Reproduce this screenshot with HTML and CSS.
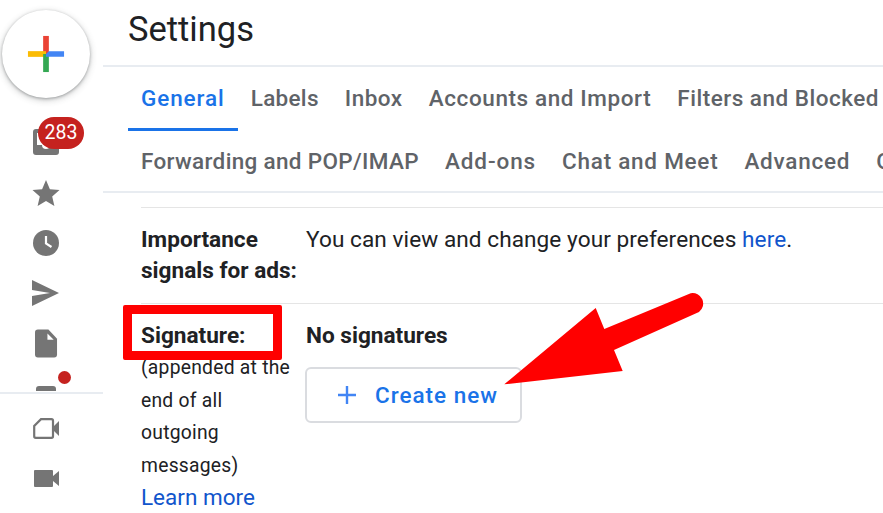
FILE: index.html
```html
<!DOCTYPE html>
<html lang="en">
<head>
    <meta charset="UTF-8">
    <title>Settings</title>
    <link rel="stylesheet" href="styles.css">
</head>
<body>
    <div class="page">
        <aside class="rail">
            <div class="compose">
                <svg width="38" height="38" viewBox="0 0 40 40">
                    <rect x="17" y="1" width="6" height="19" fill="#ea4335"/>
                    <rect x="1" y="17" width="19" height="6" fill="#fbbc04"/>
                    <rect x="17" y="20" width="6" height="19" fill="#34a853"/>
                    <path d="M20 20 L23 17 H39 V23 H20 Z" fill="#4285f4"/>
                </svg>
            </div>
            <div class="rail-top">
                <div class="rail-item">
                    <svg width="26" height="26" viewBox="0 0 26 26"><path d="M3 0H23A3 3 0 0 1 26 3V23A3 3 0 0 1 23 26H3A3 3 0 0 1 0 23V3A3 3 0 0 1 3 0ZM4 4V16H9A4 4 0 0 0 17 16H22V4Z" fill="#757575"/></svg>
                    <span class="count">283</span>
                </div>
                <div class="rail-item">
                    <svg width="28" height="26" viewBox="0 0 28 26"><path d="M14 0 L17.9 9.2 L27.5 10 L20.2 16.4 L22.4 26 L14 20.9 L5.6 26 L7.8 16.4 L.5 10 L10.1 9.2Z" fill="#757575"/></svg>
                </div>
                <div class="rail-item">
                    <svg width="26" height="26" viewBox="0 0 26 26"><circle cx="13" cy="13" r="13" fill="#757575"/><path d="M13 6V13.5L18.5 17" fill="none" stroke="#fff" stroke-width="2.2"/></svg>
                </div>
                <div class="rail-item">
                    <svg width="28" height="26" viewBox="0 0 28 26"><path d="M0 0 L27 13 L0 26 V16 L18 13 L0 10Z" fill="#757575"/></svg>
                </div>
                <div class="rail-item">
                    <svg width="23" height="29" viewBox="0 0 24 29"><path d="M3 0H14L23 9.500V26A3 3 0 0 1 20 29H3A3 3 0 0 1 0 26V3A3 3 0 0 1 3 0Z" fill="#757575"/><path d="M13 4 L19.500 10.500 H13Z" fill="#fff"/></svg>
                </div>
                <div class="rail-item rail-more">
                    <svg width="21" height="5" viewBox="0 0 21 5"><path d="M0 5V3A3 3 0 0 1 3 0H17A3 3 0 0 1 20 3V5Z" fill="#757575"/></svg>
                    <span class="dot"></span>
                </div>
            </div>
            <div class="rail-bottom">
                <div class="rail-item">
                    <svg width="27" height="21" viewBox="0 0 27 21"><path d="M8 1.200H18.500A1.500 1.500 0 0 1 20 2.700V18.300A1.500 1.500 0 0 1 18.500 19.800H2.700A1.500 1.500 0 0 1 1.200 18.300V8Z" fill="none" stroke="#757575" stroke-width="2.200"/><path d="M21 8 L26 3 V18 L21 13Z" fill="#757575"/></svg>
                </div>
                <div class="rail-item">
                    <svg width="25" height="17" viewBox="0 0 25 17"><path d="M1 0H18A1 1 0 0 1 19 1V16A1 1 0 0 1 18 17H1A1 1 0 0 1 0 16V1A1 1 0 0 1 1 0ZM19 6 L25 1 V16 L19 11Z" fill="#757575"/></svg>
                </div>
            </div>
        </aside>

        <main class="main">
            <h1 class="title">Settings</h1>
            <nav class="tabs">
                <div class="tab-row first">
                    <a class="tab active">General</a>
                    <a class="tab">Labels</a>
                    <a class="tab">Inbox</a>
                    <a class="tab">Accounts and Import</a>
                    <a class="tab">Filters and Blocked Addresses</a>
                </div>
                <div class="tab-row second">
                    <a class="tab">Forwarding and POP/IMAP</a>
                    <a class="tab">Add-ons</a>
                    <a class="tab">Chat and Meet</a>
                    <a class="tab">Advanced</a>
                    <a class="tab">Offline</a>
                </div>
            </nav>
            <div class="content">
                <div class="row ads">
                    <div class="label"><strong>Importance signals for ads:</strong></div>
                    <div class="value">You can view and change your preferences <a class="link">here</a>.</div>
                </div>
                <div class="row sig">
                    <div class="label">
                        <strong>Signature:</strong>
                        <p class="note">(appended at the end of all outgoing messages)</p>
                        <a class="link">Learn more</a>
                    </div>
                    <div class="value">
                        <strong>No signatures</strong>
                        <button class="create">
                            <svg width="20" height="20" viewBox="0 0 20 20"><path d="M10 1V19M1 10H19" stroke="#4285f4" stroke-width="2.400" fill="none"/></svg>
                            Create new
                        </button>
                    </div>
                </div>
            </div>
        </main>
    </div>

    <!-- annotation drawn on top of the screenshot -->
    <div class="red-box"></div>
    <svg class="arrow" width="220" height="100" viewBox="0 0 220 100">
        <path d="M1.300 92.300 L92.700 16 L101.300 37 L187.700 1.300 A10.500 10.500 0 0 1 196 20 L111 58 L119.700 79Z" fill="#f00"/>
    </svg>
</body>
</html>
```

FILE: styles.css
```css
html, body {
    margin: 0;
    height: 513px;
    overflow: hidden;
    background-color: #fff;
}
body {
    font-family: 'Roboto', sans-serif;
    color: #202124;
}
.page {
    display: flex;
    height: 513px;
}

/* left icon rail */
.rail {
    width: 103px;
    flex-shrink: 0;
    display: flex;
    flex-direction: column;
}
.compose {
    width: 88px;
    height: 88px;
    margin: 10px 0 0 2px;
    border-radius: 50%;
    background-color: #fff;
    box-shadow: 0 1px 3px rgba(60, 64, 67, .4), 0 2px 6px 1px rgba(60, 64, 67, .2);
    display: flex;
    align-items: center;
    justify-content: center;
    flex-shrink: 0;
}
.rail-top {
    height: 294px;
    overflow: hidden;
    padding-top: 19px;
    box-sizing: border-box;
    flex-shrink: 0;
    display: flex;
    flex-direction: column;
}
.rail-item {
    width: 92px;
    height: 50.4px;
    flex-shrink: 0;
    display: flex;
    align-items: center;
    justify-content: center;
    position: relative;
}
.count {
    position: absolute;
    left: 38px;
    top: 0;
    width: 46px;
    height: 32px;
    border-radius: 16px;
    background-color: #c5221f;
    color: #fff;
    font-size: 19.500px;
    line-height: 32px;
    text-align: center;
}
.rail-more {
    align-items: flex-start;
    padding-top: 17px;
    box-sizing: border-box;
}
.dot {
    position: absolute;
    left: 58px;
    top: 2px;
    width: 13px;
    height: 13px;
    border-radius: 50%;
    background-color: #c5221f;
}
.rail-bottom {
    border-top: 2px solid #e8ecf1;
    padding-top: 9px;
    display: flex;
    flex-direction: column;
    height: 100px;
}

/* main column */
.main {
    flex: 1;
    min-width: 0;
    overflow: hidden;
}
.title {
    margin: 0;
    height: 65px;
    padding: 9px 0 0 25px;
    box-sizing: border-box;
    font-size: 34.500px;
    font-weight: 400;
    line-height: 40px;
    white-space: nowrap;
}
.tabs {
    border-top: 2px solid #e8ecf1;
    border-bottom: 2px solid #e8ecf1;
    height: 124px;
    padding-left: 25px;
}
.tab-row {
    display: flex;
    height: 61px;
    white-space: nowrap;
}
.tab-row.second {
    height: 63px;
    padding-top: 2px;
    box-sizing: border-box;
}
.tab {
    padding: 17px 13px 0;
    height: 44px;
    font-size: 22.500px;
    line-height: 28px;
    font-weight: 500;
    letter-spacing: .5px;
    color: #5f6368;
    flex-shrink: 0;
}
.tab.active {
    color: #1a73e8;
    border-bottom: 3px solid #1a73e8;
}
/* Roboto runs a bit off the original face, so each tab is nudged to its width */
.first .tab:nth-child(1) { letter-spacing: .9px; }
.first .tab:nth-child(2) { letter-spacing: .3px; }
.first .tab:nth-child(4) { letter-spacing: .6px; }
.second .tab:nth-child(1) { letter-spacing: .33px; }
.second .tab:nth-child(2) { letter-spacing: .9px; }
.second .tab:nth-child(3) { letter-spacing: .75px; }
.second .tab:nth-child(4) { letter-spacing: .75px; }
.content {
    margin: 14px 0 0 38px;
    font-size: 22.600px;
}
.row {
    display: flex;
    border-top: 1px solid #e5e5e5;
}
.ads {
    height: 96px;
    padding-top: 16px;
    box-sizing: border-box;
}
.ads .value {
    letter-spacing: .07px;
}
.sig {
    padding-top: 16px;
}
.label {
    width: 165px;
    flex-shrink: 0;
    line-height: 31px;
}
.label strong, .value strong {
    font-weight: 700;
    color: #202124;
}
.note {
    margin: 1px 0 0;
    font-size: 19.300px;
    line-height: 32.500px;
    letter-spacing: .25px;
    color: #202124;
    width: 155px;
}
.sig .label .link {
    display: block;
    font-size: 22.500px;
    line-height: 30px;
}
.value {
    line-height: 31px;
    white-space: nowrap;
    color: #202124;
}
.link {
    color: #1155cc;
}
.create {
    display: flex;
    align-items: center;
    gap: 18px;
    width: 217px;
    height: 56px;
    margin: 16px 0 0 -1px;
    padding: 0 0 0 30px;
    box-sizing: border-box;
    border: 2px solid #dadce0;
    border-radius: 6px;
    background-color: #fff;
    color: #1a73e8;
    font-family: 'Roboto', sans-serif;
    font-size: 22.500px;
    font-weight: 500;
    letter-spacing: 1px;
}

/* annotation */
.red-box {
    position: absolute;
    left: 123px;
    top: 305px;
    width: 159px;
    height: 55px;
    box-sizing: border-box;
    border: 9px solid #f00;
    border-radius: 2px;
}
.arrow {
    position: absolute;
    left: 503px;
    top: 292px;
}
```
